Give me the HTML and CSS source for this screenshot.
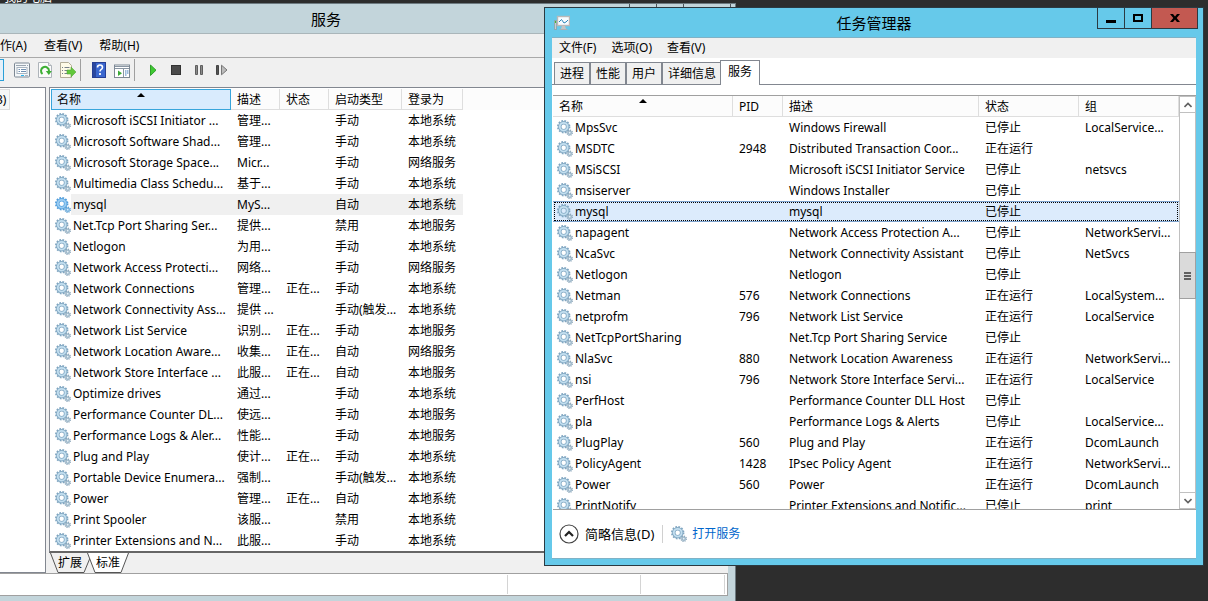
FILE: index.html
```
<!DOCTYPE html>
<html lang="zh-CN">
  <head>
    <meta charset="UTF-8" />
    <meta name="viewport" content="width=device-width, initial-scale=1.0" />
    <title>任务管理器</title>
    <link rel="stylesheet" href="styles.css">
  </head>
  <body>
    <svg class="sprite" aria-hidden="true">
      <symbol id="gear" viewBox="0 0 16 16">
        <circle cx="6.7" cy="6.7" r="5.7" fill="none" stroke="#7fa5c0" stroke-width="2" stroke-dasharray="1.7 1.28" />
        <circle cx="6.7" cy="6.7" r="3.9" fill="none" stroke="#86abc5" stroke-width="3.4" />
        <circle cx="6.7" cy="6.7" r="3.9" fill="none" stroke="#c3dff0" stroke-width="1.8" />
        <circle cx="12.7" cy="12.7" r="2.5" fill="none" stroke="#8ba5b9" stroke-width="1.6" stroke-dasharray="1.1 .86" />
        <circle cx="12.7" cy="12.7" r="1.6" fill="#e8f2f8" stroke="#9db8ca" stroke-width="1.4" />
      </symbol>
      <symbol id="gear-active" viewBox="0 0 16 16">
        <circle cx="6.7" cy="6.7" r="5.7" fill="none" stroke="#4f9bd9" stroke-width="2" stroke-dasharray="1.7 1.28" />
        <circle cx="6.7" cy="6.7" r="3.9" fill="none" stroke="#5ca6e0" stroke-width="3.4" />
        <circle cx="6.7" cy="6.7" r="3.9" fill="none" stroke="#9bcdf3" stroke-width="1.8" />
        <circle cx="12.7" cy="12.7" r="2.5" fill="none" stroke="#5f9fd0" stroke-width="1.6" stroke-dasharray="1.1 .86" />
        <circle cx="12.7" cy="12.7" r="1.6" fill="#d8ecfb" stroke="#75b2e0" stroke-width="1.4" />
      </symbol>
    </svg>

    <div class="desktop">
      <span class="desktop-label">我的电脑</span>

      <!-- Servicios (MMC) -->
      <section class="window services">
        <header class="titlebar">
          <h1>服务</h1>
          <div class="back-buttons"><i></i><i></i><i></i></div>
        </header>
        <nav class="menu">
          <a href="#">操作(A)</a>
          <a href="#">查看(V)</a>
          <a href="#">帮助(H)</a>
        </nav>
        <div class="toolbar">
          <button class="tool pressed" aria-label="控制台树"></button>
          <button class="tool" aria-label="属性">
            <svg viewBox="0 0 16 16"><rect x=".5" y="1" width="15" height="14" rx="1" fill="#f4f7f9" stroke="#7d8894" /><path d="M2 3.5h10M13 3.5h1" stroke="#9aa5b0" /><rect x="3" y="5.5" width="10" height="6" fill="#fff" stroke="#a8b4c0" /><path d="M4.500 7.500h1.500M4.500 9.500h1.500M7 7.500h5M7 9.500h5" stroke="#6f8fb0" /><path d="M7 13.500h3" stroke="#27b5ee" /><path d="M11 13.500h3" stroke="#a8b4c0" /></svg>
          </button>
          <button class="tool" aria-label="刷新">
            <svg viewBox="0 0 16 16"><path d="M1.500.5h10l3 3v12h-13z" fill="#fbfbfb" stroke="#aeb4ba" /><path d="M11.500.5v3h3" fill="#e8e8e8" stroke="#aeb4ba" /><path d="M5.500 12A4 4 0 1 1 12 9" fill="none" stroke="#3daf35" stroke-width="2" /><path d="M8.800 9h6l-3 4z" fill="#3daf35" /></svg>
          </button>
          <button class="tool" aria-label="导出列表">
            <svg viewBox="0 0 16 16"><path d="M.5.5h8l3 3v12H.5z" fill="#fffbe8" stroke="#b3ad98" /><path d="M2 5.500h1M2 8.500h1M2 11.500h1M4.500 5.500h5M4.500 8.500h4M4.500 11.500h4" stroke="#77808a" /><path d="M7 8h4V5l5 5-5 5v-3H7z" fill="#62c83b" stroke="#55a63a" stroke-width=".6" /></svg>
          </button>
          <span class="divider"></span>
          <button class="tool" aria-label="帮助">
            <svg viewBox="0 0 16 16"><rect x="1.500" y=".5" width="13" height="15" fill="#3b67cf" stroke="#263e94" /><path d="M2 1h3v14H2z" fill="#2a479f" /><path d="M6.500 5.500q0-2.500 2.500-2.500t2.500 2.300q0 1.500-1.500 2.300-1 .7-1 2" fill="none" stroke="#fff" stroke-width="1.600" /><path d="M8.100 11h1.800v2H8.100z" fill="#fff" /></svg>
          </button>
          <button class="tool" aria-label="操作窗格">
            <svg viewBox="0 0 16 16"><rect x=".5" y="3" width="15" height="12.500" fill="#fff" stroke="#7d8894" /><path d="M1 4.500h14M1 6.500h14" stroke="#8995a2" /><path d="M9.500 7v8" stroke="#8995a2" /><path d="M4 8.500l4 2.700L4 14z" fill="#3ba936" /><path d="M11 9h1.500M13 9h1.500M11 11h1.500M13 11h1.500M11 13h1.500" stroke="#3d7abb" /></svg>
          </button>
          <span class="divider"></span>
          <button class="tool" aria-label="启动服务">
            <svg viewBox="0 0 16 16"><path d="M5.500 3v10.500L11 8.200z" fill="#3fca32" stroke="#2fa02a" /></svg>
          </button>
          <button class="tool" aria-label="停止服务">
            <svg viewBox="0 0 16 16"><rect x="3.500" y="3.500" width="9" height="9" fill="#4b4b4b" stroke="#333" /></svg>
          </button>
          <button class="tool" aria-label="暂停服务">
            <svg viewBox="0 0 16 16"><path d="M4.500 3.500h2v9h-2zM9.500 3.500h2v9h-2z" fill="#8a8a8a" stroke="#5f5f5f" /></svg>
          </button>
          <button class="tool" aria-label="重启服务">
            <svg viewBox="0 0 16 16"><path d="M2.500 3.500h2v9h-2z" fill="#555" stroke="#444" /><path d="M7.500 3.200v9.600L13 8z" fill="#bbb" stroke="#777" /></svg>
          </button>
        </div>
        <div class="panes">
          <aside class="tree"><span>3)</span></aside>
          <div class="detail">
            <div class="list">
              <table>
                <colgroup><col class="w-name"><col class="w-desc"><col class="w-desc"><col class="w-start"><col class="w-logon"><col></colgroup>
                <thead>
                  <tr><th class="sorted">名称</th><th>描述</th><th>状态</th><th>启动类型</th><th>登录为</th><th class="rest"></th></tr>
                </thead>
                <tbody>
                  <tr><td class="name"><svg><use href="#gear" /></svg>Microsoft iSCSI Initiator ...</td><td>管理...</td><td></td><td>手动</td><td>本地系统</td></tr>
                  <tr><td class="name"><svg><use href="#gear" /></svg>Microsoft Software Shad...</td><td>管理...</td><td></td><td>手动</td><td>本地系统</td></tr>
                  <tr><td class="name"><svg><use href="#gear" /></svg>Microsoft Storage Space...</td><td>Micr...</td><td></td><td>手动</td><td>网络服务</td></tr>
                  <tr><td class="name"><svg><use href="#gear" /></svg>Multimedia Class Schedu...</td><td>基于...</td><td></td><td>手动</td><td>本地系统</td></tr>
                  <tr class="current"><td class="name"><svg><use href="#gear-active" /></svg>mysql</td><td>MyS...</td><td></td><td>自动</td><td>本地系统</td></tr>
                  <tr><td class="name"><svg><use href="#gear" /></svg>Net.Tcp Port Sharing Ser...</td><td>提供...</td><td></td><td>禁用</td><td>本地服务</td></tr>
                  <tr><td class="name"><svg><use href="#gear" /></svg>Netlogon</td><td>为用...</td><td></td><td>手动</td><td>本地系统</td></tr>
                  <tr><td class="name"><svg><use href="#gear" /></svg>Network Access Protecti...</td><td>网络...</td><td></td><td>手动</td><td>网络服务</td></tr>
                  <tr><td class="name"><svg><use href="#gear" /></svg>Network Connections</td><td>管理...</td><td>正在...</td><td>手动</td><td>本地系统</td></tr>
                  <tr><td class="name"><svg><use href="#gear" /></svg>Network Connectivity Ass...</td><td>提供 ...</td><td></td><td>手动(触发...</td><td>本地系统</td></tr>
                  <tr><td class="name"><svg><use href="#gear" /></svg>Network List Service</td><td>识别...</td><td>正在...</td><td>手动</td><td>本地服务</td></tr>
                  <tr><td class="name"><svg><use href="#gear" /></svg>Network Location Aware...</td><td>收集...</td><td>正在...</td><td>自动</td><td>网络服务</td></tr>
                  <tr><td class="name"><svg><use href="#gear" /></svg>Network Store Interface ...</td><td>此服...</td><td>正在...</td><td>自动</td><td>本地服务</td></tr>
                  <tr><td class="name"><svg><use href="#gear" /></svg>Optimize drives</td><td>通过...</td><td></td><td>手动</td><td>本地系统</td></tr>
                  <tr><td class="name"><svg><use href="#gear" /></svg>Performance Counter DL...</td><td>使远...</td><td></td><td>手动</td><td>本地服务</td></tr>
                  <tr><td class="name"><svg><use href="#gear" /></svg>Performance Logs &amp; Aler...</td><td>性能...</td><td></td><td>手动</td><td>本地服务</td></tr>
                  <tr><td class="name"><svg><use href="#gear" /></svg>Plug and Play</td><td>使计...</td><td>正在...</td><td>手动</td><td>本地系统</td></tr>
                  <tr><td class="name"><svg><use href="#gear" /></svg>Portable Device Enumera...</td><td>强制...</td><td></td><td>手动(触发...</td><td>本地系统</td></tr>
                  <tr><td class="name"><svg><use href="#gear" /></svg>Power</td><td>管理...</td><td>正在...</td><td>自动</td><td>本地系统</td></tr>
                  <tr><td class="name"><svg><use href="#gear" /></svg>Print Spooler</td><td>该服...</td><td></td><td>禁用</td><td>本地系统</td></tr>
                  <tr><td class="name"><svg><use href="#gear" /></svg>Printer Extensions and N...</td><td>此服...</td><td></td><td>手动</td><td>本地系统</td></tr>
                </tbody>
              </table>
            </div>
            <div class="sheet-tabs">
              <button>
                <svg viewBox="0 0 40 20"><path d="M.5 0L8 19.500h26L40 3V0z" fill="#f0f0f0" /><path d="M.5 0L8 19.500h26L40 5" fill="none" stroke="#555" /></svg>
                <span>扩展</span>
              </button>
              <button class="active">
                <svg viewBox="0 0 42 20"><path d="M.5 0L8 19.500h26L41.500 0z" fill="#fff" /><path d="M.5 0L8 19.500h26L41.500 0" fill="none" stroke="#555" /></svg>
                <span>标准</span>
              </button>
            </div>
          </div>
        </div>
        <footer class="statusbar"><span></span><span></span><span></span></footer>
      </section>

      <!-- Administrador de tareas -->
      <section class="window taskmgr">
        <header class="titlebar">
          <svg class="app-icon" viewBox="0 0 16 16"><path d="M.5 5.500h2v9h-2z" fill="#c9ced1" stroke="#8a9296" stroke-width=".6" /><path d="M1 6h1v2H1z" fill="#48b82e" /><rect x="3.500" y="1.500" width="12" height="9" fill="#f8fcff" stroke="#b9b9b9" stroke-width="1.400" /><path d="M5 7l2.500-2.500L10 8l2-1 2-2" fill="none" stroke="#2c86b8" /><path d="M8 11h3l1 3H7z" fill="#c4c4c4" /><path d="M5.500 14.500h8" stroke="#aab1b5" /></svg>
          <h1>任务管理器</h1>
          <div class="win-buttons">
            <button aria-label="最小化"><svg viewBox="0 0 10 10"><path d="M0 7h10v3H0z" /></svg></button>
            <button aria-label="最大化"><svg viewBox="0 0 10 10"><path d="M0 1h10v8H0zM2 3v4h6V3z" fill-rule="evenodd" /></svg></button>
            <button class="close" aria-label="关闭"><svg viewBox="0 0 10 10"><path d="M0 1h3l2 2.500L7 1h3L6.700 5 10 9H7L5 6.500 3 9H0l3.300-4z" /></svg></button>
          </div>
        </header>
        <div class="client">
          <nav class="menu">
            <a href="#">文件(F)</a>
            <a href="#">选项(O)</a>
            <a href="#">查看(V)</a>
          </nav>
          <div class="tabs" role="tablist">
            <button role="tab">进程</button>
            <button role="tab">性能</button>
            <button role="tab">用户</button>
            <button role="tab">详细信息</button>
            <button role="tab" class="active" aria-selected="true">服务</button>
          </div>
          <div class="grid">
            <div class="list">
              <table>
                <colgroup><col class="w-name"><col class="w-pid"><col><col class="w-state"><col class="w-state"></colgroup>
                <thead>
                  <tr><th class="sorted">名称</th><th>PID</th><th>描述</th><th>状态</th><th>组</th></tr>
                </thead>
                <tbody>
                  <tr><td class="name"><svg><use href="#gear" /></svg>MpsSvc</td><td></td><td>Windows Firewall</td><td>已停止</td><td>LocalService...</td></tr>
                  <tr><td class="name"><svg><use href="#gear" /></svg>MSDTC</td><td>2948</td><td>Distributed Transaction Coor...</td><td>正在运行</td><td></td></tr>
                  <tr><td class="name"><svg><use href="#gear" /></svg>MSiSCSI</td><td></td><td>Microsoft iSCSI Initiator Service</td><td>已停止</td><td>netsvcs</td></tr>
                  <tr><td class="name"><svg><use href="#gear" /></svg>msiserver</td><td></td><td>Windows Installer</td><td>已停止</td><td></td></tr>
                  <tr class="selected"><td class="name"><svg><use href="#gear" /></svg>mysql</td><td></td><td>mysql</td><td>已停止</td><td></td></tr>
                  <tr><td class="name"><svg><use href="#gear" /></svg>napagent</td><td></td><td>Network Access Protection A...</td><td>已停止</td><td>NetworkServi...</td></tr>
                  <tr><td class="name"><svg><use href="#gear" /></svg>NcaSvc</td><td></td><td>Network Connectivity Assistant</td><td>已停止</td><td>NetSvcs</td></tr>
                  <tr><td class="name"><svg><use href="#gear" /></svg>Netlogon</td><td></td><td>Netlogon</td><td>已停止</td><td></td></tr>
                  <tr><td class="name"><svg><use href="#gear" /></svg>Netman</td><td>576</td><td>Network Connections</td><td>正在运行</td><td>LocalSystem...</td></tr>
                  <tr><td class="name"><svg><use href="#gear" /></svg>netprofm</td><td>796</td><td>Network List Service</td><td>正在运行</td><td>LocalService</td></tr>
                  <tr><td class="name"><svg><use href="#gear" /></svg>NetTcpPortSharing</td><td></td><td>Net.Tcp Port Sharing Service</td><td>已停止</td><td></td></tr>
                  <tr><td class="name"><svg><use href="#gear" /></svg>NlaSvc</td><td>880</td><td>Network Location Awareness</td><td>正在运行</td><td>NetworkServi...</td></tr>
                  <tr><td class="name"><svg><use href="#gear" /></svg>nsi</td><td>796</td><td>Network Store Interface Servi...</td><td>正在运行</td><td>LocalService</td></tr>
                  <tr><td class="name"><svg><use href="#gear" /></svg>PerfHost</td><td></td><td>Performance Counter DLL Host</td><td>已停止</td><td></td></tr>
                  <tr><td class="name"><svg><use href="#gear" /></svg>pla</td><td></td><td>Performance Logs &amp; Alerts</td><td>已停止</td><td>LocalService...</td></tr>
                  <tr><td class="name"><svg><use href="#gear" /></svg>PlugPlay</td><td>560</td><td>Plug and Play</td><td>正在运行</td><td>DcomLaunch</td></tr>
                  <tr><td class="name"><svg><use href="#gear" /></svg>PolicyAgent</td><td>1428</td><td>IPsec Policy Agent</td><td>正在运行</td><td>NetworkServi...</td></tr>
                  <tr><td class="name"><svg><use href="#gear" /></svg>Power</td><td>560</td><td>Power</td><td>正在运行</td><td>DcomLaunch</td></tr>
                  <tr><td class="name"><svg><use href="#gear" /></svg>PrintNotify</td><td></td><td>Printer Extensions and Notific...</td><td>已停止</td><td>print</td></tr>
                </tbody>
              </table>
            </div>
            <div class="scrollbar">
              <button aria-label="向上"><svg viewBox="0 0 8 6"><path d="M.5 5L4 1.500 7.500 5" fill="none" stroke="#606060" stroke-width="1.600" /></svg></button>
              <div class="track"><div class="thumb"><i></i><i></i><i></i></div></div>
              <button aria-label="向下"><svg viewBox="0 0 8 6"><path d="M.5 1L4 4.500 7.500 1" fill="none" stroke="#606060" stroke-width="1.600" /></svg></button>
            </div>
          </div>
          <footer class="actions">
            <button>
              <svg class="round" viewBox="0 0 20 20"><circle cx="10" cy="10" r="9" fill="#fff" stroke="#444" stroke-width="1.200" /><path d="M6 12l4-4 4 4" fill="none" stroke="#222" stroke-width="2.200" /></svg>
              简略信息(D)
            </button>
            <a href="#"><svg><use href="#gear" /></svg>打开服务</a>
          </footer>
        </div>
      </section>
    </div>
  </body>
</html>
```
FILE: styles.css
```
* {
  box-sizing: border-box;
  margin: 0;
  padding: 0;
}

html,
body {
  height: 100%;
  overflow: hidden;
}

body {
  font-family: "Noto Sans", "Noto Sans CJK SC", sans-serif;
  font-size: 12px;
  color: #000;
  background: #2d2d2d;
}

button,
a {
  font: inherit;
  color: inherit;
  text-decoration: none;
  border: 0;
  background: none;
}

svg {
  display: block;
  flex: none;
}

.sprite {
  display: none;
}

.desktop {
  position: relative;
  height: 100%;
  overflow: hidden;
}

.desktop-label {
  position: absolute;
  left: 4px;
  top: -10px;
  line-height: 16px;
  color: #fff;
}

.window {
  position: absolute;
  display: flex;
  flex-direction: column;
}

.titlebar {
  display: flex;
  align-items: center;
  justify-content: center;
  position: relative;
  flex: none;
}

.titlebar h1 {
  font-size: 15px;
  font-weight: 400;
  line-height: 20px;
}

.menu {
  display: flex;
  align-items: center;
  gap: 15px;
  background: #f0f0f0;
  line-height: 18px;
}

/* Tablas */
table {
  width: 100%;
  table-layout: fixed;
  border-collapse: separate;
  border-spacing: 0;
}

th,
td {
  height: 21px;
  padding: 0 0 0 6px;
  line-height: 20px;
  font-weight: 400;
  text-align: left;
  white-space: nowrap;
  overflow: hidden;
}

th {
  background: #fcfcfc;
  border-right: 1px solid #dedede;
  border-bottom: 1px solid #dedede;
}

.sorted {
  position: relative;
}

.sorted::after {
  content: "";
  position: absolute;
  left: 50%;
  top: 3px;
  margin-left: -4px;
  border: 4px solid transparent;
  border-top: 0;
  border-bottom-color: #000;
}

td.name {
  padding-left: 4px;
}

td.name svg {
  display: inline-block;
  width: 16px;
  height: 16px;
  margin-right: 2px;
  vertical-align: -4px;
}

.list {
  flex: 1;
  min-width: 0;
  min-height: 0;
  overflow: hidden;
  background: #fff;
}

.w-name {
  width: 180px;
}

.w-desc {
  width: 49px;
}

.w-start {
  width: 73px;
}

.w-logon {
  width: 61px;
}

.w-pid {
  width: 50px;
}

.w-state {
  width: 100px;
}

/* Ventana de servicios */
.services {
  left: 0;
  right: 472px;
  top: 3px;
  bottom: 0;
  padding: 0 7px 5px 0;
  background: #c3d5db;
  border-top: 1px solid #6d7a80;
  border-right: 1px solid #6d7a80;
}

.services .titlebar {
  height: 29px;
  padding-right: 76px;
}

.back-buttons {
  position: absolute;
  right: -7px;
  top: 0;
  display: flex;
  width: 106px;
  height: 5px;
  border-left: 1px solid #4d5459;
}

.back-buttons i {
  width: 27px;
  border-right: 1px solid #4d5459;
}

.back-buttons i:last-child {
  flex: 1;
  margin-right: 4px;
}

.services .menu {
  height: 24px;
  gap: 17px;
  border-top: 1px solid #aab6ba;
  overflow: hidden;
}

.services .menu a:first-child {
  margin-left: -12px;
}

.toolbar {
  display: flex;
  align-items: center;
  gap: 7px;
  height: 30px;
  padding-bottom: 5px;
  border-top: 1px solid #a9a9a9;
  background: #f0f0f0;
}

.tool {
  width: 16px;
  height: 16px;
}

.tool svg {
  width: 16px;
  height: 16px;
}

.tool.pressed {
  width: 4px;
  height: 22px;
  margin-right: 3px;
  background: #e4f0fa;
  border: 1px solid #2a9fd8;
  border-left: 0;
}

.divider {
  width: 1px;
  height: 22px;
  margin-left: -3px;
  background: #a0a0a0;
  margin-right: 3px;
}

.panes {
  display: flex;
  gap: 3px;
  flex: 1;
  min-height: 0;
  background: #f0f0f0;
}

.tree {
  width: 46px;
  background: #fff;
  border: 1px solid #828790;
  border-left: 0;
}

.tree span {
  display: inline-block;
  margin-top: 1px;
  padding-right: 3px;
  line-height: 19px;
  margin-left: -5px;
  background: #f7f7f7;
  border: 1px solid #dedede;
}

.detail {
  flex: 1;
  min-width: 0;
  display: flex;
  flex-direction: column;
}

.detail .list {
  padding: 1px;
  border: 1px solid #828790;
  border-width: 1px 0 2px 1px;
  border-bottom-color: #666;
}

.services th {
  line-height: 19px;
}

.services .sorted {
  background: #d9ebfd;
  border: 1px solid #38a5db;
  padding-left: 5px;
  line-height: 18px;
}

.services .rest {
  border: 0;
}

.current td {
  background: #f0f0f0;
}

.current td.name {
  background: linear-gradient(90deg, #fff 20px, #f0f0f0 20px);
}

.sheet-tabs {
  display: flex;
  height: 20px;
  flex: none;
}

.sheet-tabs button {
  position: relative;
  width: 42px;
  height: 20px;
  margin-right: -4px;
}

.sheet-tabs svg {
  position: absolute;
  left: 0;
  top: 0;
  width: 42px;
  height: 20px;
}

.sheet-tabs span {
  position: relative;
  line-height: 18px;
}

.statusbar {
  display: flex;
  height: 23px;
  flex: none;
  padding: 1px 2px 1px 0;
  background: #fff;
  border: 1px solid #a0a0a0;
  border-left: 0;
}

.statusbar span {
  border-right: 1px solid #d4d4d4;
}

.statusbar span:nth-child(1) {
  width: 70%;
}

.statusbar span:nth-child(2) {
  width: 133px;
}

.statusbar span:nth-child(3) {
  flex: 1;
}

/* Administrador de tareas */
.taskmgr {
  left: 544px;
  right: 4px;
  top: 7px;
  bottom: 35px;
  padding: 0 7px 6px;
  background: #66c9ea;
  border: 1px solid #2b3a42;
}

.taskmgr .titlebar {
  height: 29px;
}

.app-icon {
  position: absolute;
  left: 2px;
  top: 7px;
  width: 16px;
  height: 16px;
}

.win-buttons {
  position: absolute;
  right: -2px;
  top: -1px;
  display: flex;
  height: 22px;
  border: 1px solid #2b3a42;
}

.win-buttons button {
  display: flex;
  align-items: center;
  justify-content: center;
  width: 27px;
  border-right: 1px solid #2b3a42;
}

.win-buttons svg {
  width: 10px;
  height: 10px;
}

.win-buttons .close {
  width: 45px;
  background: #c35951;
  border: 0;
}

.client {
  display: flex;
  flex-direction: column;
  flex: 1;
  min-height: 0;
  background: #fff;
  border-top: 1px solid #7fb2c6;
  border-bottom: 1px solid #7fb2c6;
}

.taskmgr .menu {
  height: 20px;
  padding-left: 7px;
}

.tabs {
  display: flex;
  align-items: flex-end;
  flex: none;
  height: 27px;
  padding: 0 0 0 2px;
  border-bottom: 1px solid #828790;
}

.tabs button {
  height: 22px;
  padding: 0 5px;
  line-height: 20px;
  background: #f0f0f0;
  border: 1px solid #828790;
  border-bottom: 0;
}

.tabs .active {
  height: 25px;
  padding: 0 7px 3px;
  margin: 0 0 -1px -2px;
  background: #fff;
}

.grid {
  display: flex;
  flex: 1;
  min-height: 0;
  margin-top: 10px;
  margin-left: 1px;
  border-top: 1px solid #a0a0a0;
  border-bottom: 1px solid #a0a0a0;
}

.taskmgr th {
  padding-top: 1px;
  line-height: 19px;
}

.selected {
  outline: 1px dotted #000;
  outline-offset: -2px;
}

.selected td {
  background: #dcebfc;
  border-top: 1px solid #7da2ce;
  border-bottom: 1px solid #7da2ce;
  line-height: 19px;
}

.scrollbar {
  display: flex;
  flex-direction: column;
  width: 17px;
  flex: none;
  border-left: 1px solid #c0c0c0;
  border-right: 1px solid #c0c0c0;
}

.scrollbar button {
  display: flex;
  align-items: center;
  justify-content: center;
  height: 17px;
  border: 0 solid #c0c0c0;
  border-width: 1px 0;
}

.scrollbar button svg {
  width: 8px;
  height: 6px;
}

.track {
  flex: 1;
  display: flex;
  flex-direction: column;
  padding-top: 139px;
}

.thumb {
  display: flex;
  flex-direction: column;
  align-items: center;
  justify-content: center;
  gap: 1px;
  height: 47px;
  margin: 0 -1px;
  background: #dadada;
  border: 1px solid #a0a0a0;
}

.thumb i {
  width: 7px;
  height: 2px;
  background: #606060;
}

.actions {
  display: flex;
  align-items: center;
  flex: none;
  height: 48px;
  padding-left: 7px;
}

.actions button,
.actions a {
  display: flex;
  align-items: center;
  line-height: 18px;
}

.actions button {
  gap: 6px;
  font-size: 13px;
}

.actions .round {
  width: 20px;
  height: 20px;
}

.actions a {
  gap: 5px;
  margin-left: 8px;
  padding-left: 8px;
  color: #0066cc;
  border-left: 1px solid #d0d0d0;
}

.actions a svg {
  width: 16px;
  height: 16px;
}
```
